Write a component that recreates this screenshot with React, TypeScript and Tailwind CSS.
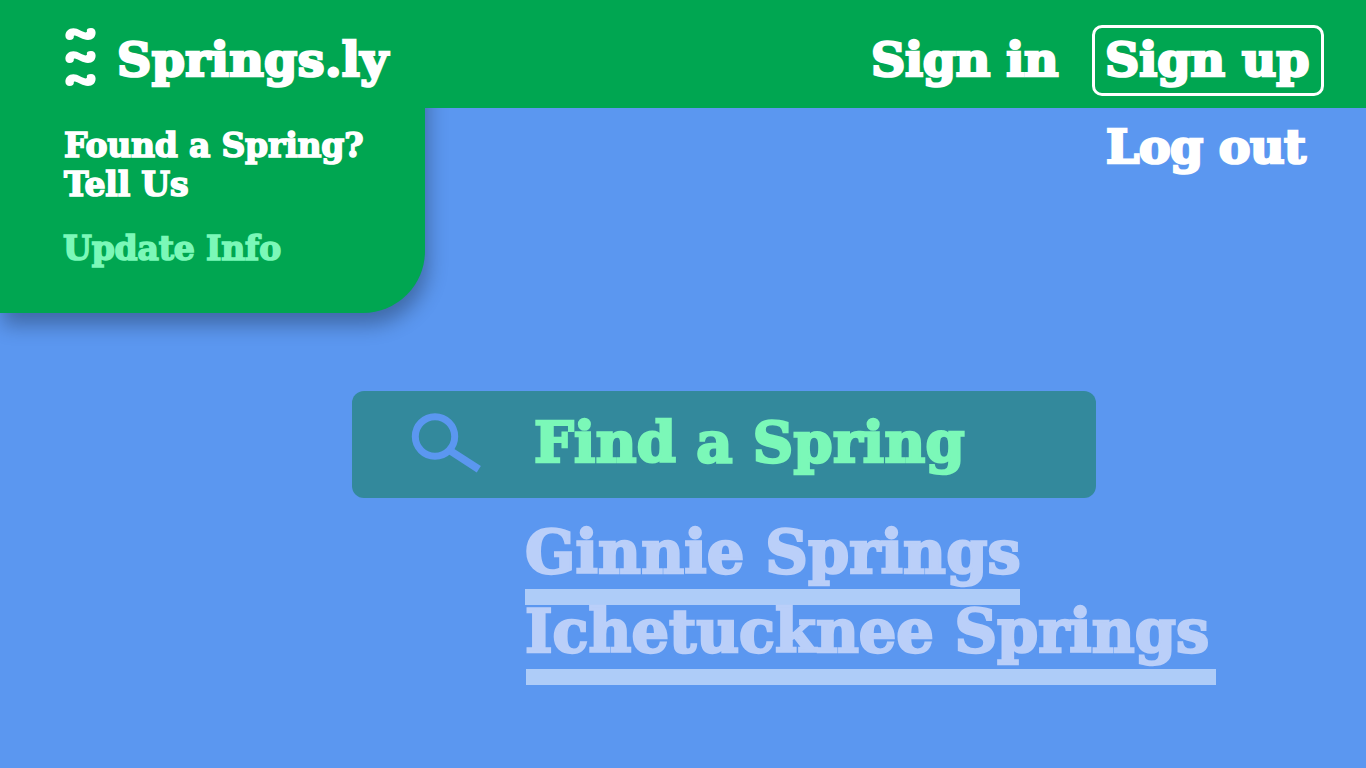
const waves = [0, 23, 46];

function WaveLogo() {
  return (
    <svg width="32" height="60" viewBox="0 0 32 60" fill="white" aria-hidden="true">
      {waves.map((y) => (
        <path
          key={y}
          transform={`translate(0 ${y})`}
          d="M8.8 9.2C9.2 11.6 7.4 13 4.6 13C2 13 .4 11.2 .4 8.8C.4 4.6 3.6 1.3 8.4 1.3C13.4 1.3 17 5 20.4 5.4C21.6 5.4 22.2 5 21.9 3.8C21.4 2.2 23 .9 26 .9C29 .9 30.6 2.8 30.6 5.4C30.6 10 27.6 12.9 23 12.9C17.6 12.9 13.6 9.4 10 8.6C9.2 8.4 8.8 8.6 8.8 9.2Z"
        />
      ))}
    </svg>
  );
}

function SearchIcon() {
  return (
    <svg width="72" height="62" viewBox="0 0 72 62" fill="none" stroke="#5b97f0" strokeWidth="7" aria-hidden="true">
      <circle cx="24" cy="24.5" r="19.7" />
      <path d="M39 38.6L67.8 57.2" strokeWidth="7.6" />
    </svg>
  );
}

export default function App() {
  return (
    <div className="flex h-[768px] w-[1366px] flex-col overflow-hidden bg-[#5b97f0] font-['DejaVu_Serif',serif] font-bold whitespace-nowrap text-white">
      <header className="relative z-10 flex h-[108px] shrink-0 items-start bg-[#00a651]">
        <div className="flex w-[871px] pl-[65px]">
          <div className="pt-[27px]">
            <WaveLogo />
          </div>
          <h1 className="pt-[29px] pl-[20px] text-[47.5px] leading-[60px] tracking-[0.4px] [-webkit-text-stroke:2.6px_white]">Springs.ly</h1>
        </div>
        <nav className="flex text-[47.5px] leading-[60px] [-webkit-text-stroke:2.6px_white]">
          <a className="w-[221px] pt-[29px] tracking-[-0.3px]">Sign in</a>
          <a className="mt-[25px] h-[71px] w-[232px] rounded-[10px] border-3 border-white pt-px pl-[10px] tracking-[0px]">Sign up</a>
        </nav>
      </header>

      <div className="flex h-[205px] shrink-0">
        <aside className="-mt-[40px] h-[245px] w-[425px] rounded-br-[62px] bg-[#00a651] pt-[58px] pl-[64px] text-[33px] leading-[39px] shadow-[3px_12px_20px_rgba(0,0,0,0.3)]">
          <p className="tracking-[-0.2px] [-webkit-text-stroke:1.6px_white]">
            Found a Spring?
            <br />
            Tell Us
          </p>
          <p className="-ml-px pt-[25px] tracking-[-0.15px] text-[#7bf8b8] [-webkit-text-stroke:1.6px_#7bf8b8]">Update Info</p>
        </aside>
        <a className="pt-[8px] pl-[681px] text-[47.5px] leading-[60px] tracking-[-0.5px] [-webkit-text-stroke:2.6px_white]">Log out</a>
      </div>

      <main className="pt-[78px]">
        <div className="ml-[352px] flex h-[107px] w-[744px] rounded-[12px] bg-[#33899c]">
          <div className="w-[181px] pt-[21px] pl-[59px]">
            <SearchIcon />
          </div>
          <span className="pl-px text-[56px] leading-[102px] tracking-[0.35px] text-[#7bf8b8] [-webkit-text-stroke:2.6px_#7bf8b8]">Find a Spring</span>
        </div>
        <ul className="mt-[28px] ml-[525px] text-[59px] leading-[52px] text-[#bacff9] [-webkit-text-stroke:2.4px_#bacff9]">
          <li className="h-[63px] pt-px tracking-[0.15px]">Ginnie Springs</li>
          <li className="h-[16px] w-[495px] bg-[#aeccf8]" />
          <li className="h-[64px] pt-px tracking-[0px]">Ichetucknee Springs</li>
          <li className="ml-px h-[16px] w-[690px] bg-[#aeccf8]" />
        </ul>
      </main>
    </div>
  );
}
